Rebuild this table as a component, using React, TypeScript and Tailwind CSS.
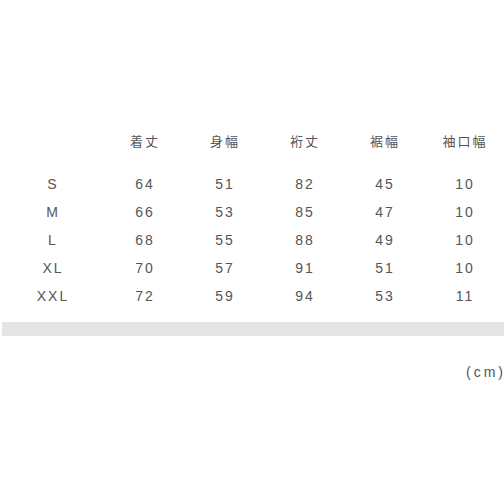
const head = ["", "着丈", "身幅", "裄丈", "裾幅", "袖口幅"];

const rows = [
  ["S", "64", "51", "82", "45", "10"],
  ["M", "66", "53", "85", "47", "10"],
  ["L", "68", "55", "88", "49", "10"],
  ["XL", "70", "57", "91", "51", "10"],
  ["XXL", "72", "59", "94", "53", "11"],
];

function Row({ cells, small }: { cells: string[]; small?: boolean }) {
  return (
    <div className={`flex h-[28px] items-center ${small ? "text-[13px]" : ""}`}>
      {cells.map((c, i) => (
        <div
          key={i}
          className={`${i === 0 ? "w-[104px]" : "w-[80px]"} shrink-0 pl-[2px] text-center tracking-[2px]`}
        >
          {c}
        </div>
      ))}
    </div>
  );
}

export default function App() {
  return (
    <div
      className="h-[504px] w-[504px] overflow-hidden bg-white text-[14px] text-[#555]"
      style={{ fontFamily: '"Liberation Sans", "Noto Sans CJK JP", sans-serif' }}
    >
      <div className="pt-[128px]">
        <Row cells={head} small />
        <div className="mt-[14px]">
          {rows.map((r) => (
            <Row key={r[0]} cells={r} />
          ))}
        </div>
      </div>
      <div className="ml-[2px] mt-[12px] h-[14px] bg-[#e5e5e5]" />
      <div className="mt-[26px] flex justify-end pr-[1px]">
        <span className="tracking-[3px]">(cm</span>
        <span>)</span>
      </div>
    </div>
  );
}
